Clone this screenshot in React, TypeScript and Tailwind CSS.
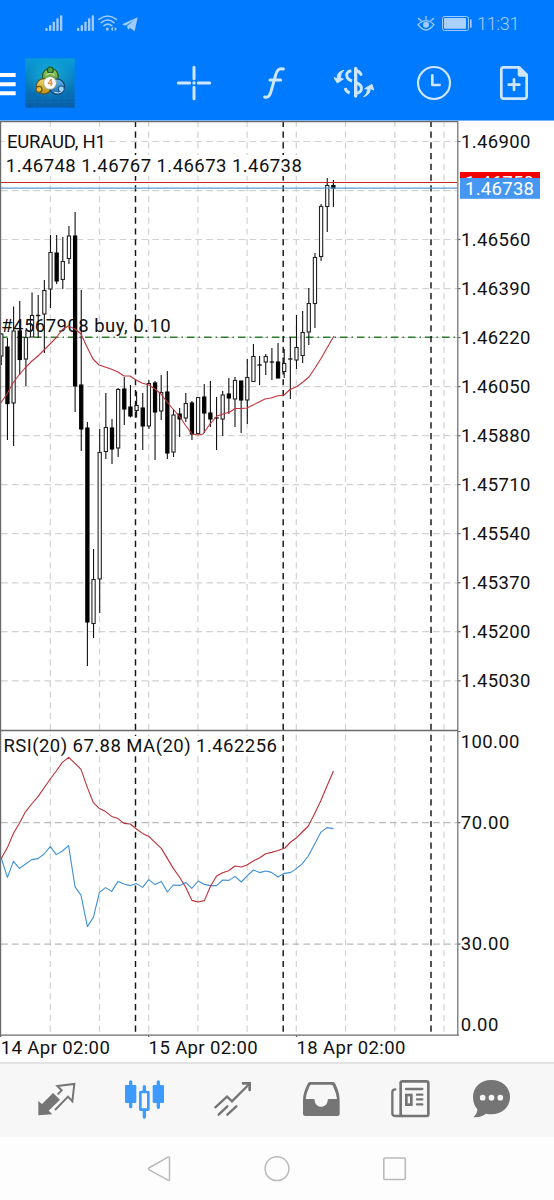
import React from "react";

type Candle = [high: number, top: number, bottom: number, low: number, kind: 0 | 1 | 2];

const STEP = 6.15;
const FIRST = 1.3;

// kind: 0 = hollow (up), 1 = filled (down), 2 = doji
const CANDLES: Candle[] = [
  [333, 334, 356, 365, 0], [338, 347, 403.6, 440, 1], [306.5, 331, 403, 446, 0], [301, 331, 359.5, 375, 1],
  [330, 337.5, 359, 386, 0], [292.5, 315.5, 337, 337, 0], [295, 315.5, 315.5, 338, 2], [280, 290.5, 314, 353, 0],
  [235, 252.5, 289, 308, 0], [235, 253, 281, 284, 1], [237, 261.5, 279.5, 289, 0], [226, 236, 258.5, 264, 0],
  [212, 236, 386, 412, 1], [290, 385, 429, 451, 1], [422, 428, 622, 666, 1], [549, 579.5, 623.5, 638, 0],
  [429, 452.5, 579, 613, 0], [393, 427.5, 451.5, 459, 0], [419, 428, 449, 464, 1], [388, 389.5, 448, 457, 0],
  [377, 389, 409, 425, 1], [385, 407, 416, 417.5, 1], [391.5, 405.5, 410.5, 417.5, 0], [393, 408, 426, 450, 1],
  [380, 383.5, 426, 429, 0], [381, 383, 412, 460, 1], [375, 392.5, 411, 420, 0], [371, 392, 453, 459, 1],
  [409, 415, 452, 457, 0], [408, 414, 419, 437, 1], [393, 403.5, 418, 422, 0], [401, 403, 434, 440, 1],
  [397, 397.5, 433.5, 434, 0], [384, 397, 413, 433, 1], [381, 413, 419, 427, 1], [397, 418, 418, 450, 2],
  [391, 395, 419, 436, 0], [378, 394, 398, 414, 1], [377, 380.5, 399, 427, 0], [381, 381, 400, 433, 1],
  [359, 377.5, 400, 424, 0], [344, 356.5, 381.5, 382, 0], [356, 365, 365, 385, 2], [354, 356.5, 362, 375, 0],
  [348, 362, 362, 380, 2], [343, 362, 378, 378, 1], [349, 363.5, 371.5, 378, 0], [337, 359, 359, 399, 2],
  [315, 347.5, 360, 369, 0], [311, 332.5, 355.5, 363, 0], [288, 303.5, 332, 345, 0], [253, 257.5, 303.5, 328, 0],
  [204, 206.5, 256.5, 261, 0], [178, 185.5, 206.5, 232, 0], [180, 185.5, 188.5, 207, 1],
];

const PRICE_MA =
  "0,404 7,394 13,383 19,375 25,368 32,361 38,356 44,350 50,344 56,338 62,330 68,326 75,329 81,334 87,347 93,359 99,365 105,367 111,369 118,372 124,376 130,376 136,380 142,383 149,385 155,389 161,394 167,402 173,409 180,417 186,426 192,434 198,435 203,434 210,424 217,416 223,414 230,412 235,408.5 241,408.5 247,408 253,405 259,402 265,399 271,398 277,396 284,395 290,389.5 297,386.5 303,382 309,377 315,368 321,358.5 327,348 334,336";

const RSI_MA =
  "1,859 7.4,847.6 13.4,833.5 19.4,823.2 25.6,811.6 31.7,804 38,796.6 44,788 50.3,779 56.3,771 62.4,762.4 68.6,757.4 75,763.4 81,769.4 87.4,787.6 93.4,802.6 99.4,808.6 105.6,811.6 111.7,816.4 118,818.6 124,823.4 130.3,824 136.4,829 142.6,833.4 148.7,836.4 155,842.4 161.3,848.4 167.3,858.4 173.3,868.4 179.8,877.5 185.8,887.5 192,900.4 198,902 204.4,900.6 210.6,886 216.6,876 222.6,872.7 228.6,870.7 235,866 241.3,867 247,865 253.3,861 259.4,858 265.6,853.7 271.6,852.4 278,850.5 285,848 290.7,842 296.7,837.7 302.3,832 308.3,826 314.7,813.4 320.7,801 327,786 333.5,771";

const RSI =
  "1,857 7.4,877.4 13.4,861.4 19.4,868.4 25.6,864 31.7,859.6 38,858.6 44,854 50.3,846.6 56.3,854.6 62.4,851 68.6,845.6 75,886.6 81,895.4 87.4,926.6 93.4,917.4 99.4,892.4 105.6,887.6 111.7,891.4 118,881.4 124,884 130.3,885.6 136.4,883.6 142.6,887.4 148.7,879.6 155,884.6 161.3,881.4 167.3,892 173.3,885 179.8,885.4 185.8,882.4 191.8,888.4 198.3,881 204.4,884.4 210.6,885.6 216.6,885.6 222.6,880 229,880.4 235,876.4 241.3,882 247.4,875.6 253.4,870 259.7,872.6 265.6,871 271.6,872.4 278,877 283.4,873.6 290.7,872.4 296.7,868.4 302.3,863.6 308.3,856 314.7,844 320.7,832.4 327,827.6 333.5,828.6";

const GRID_X = [50.3, 99.5, 148.7, 197.9, 247.1, 296.3, 345.5, 394.8, 444];
const DAYS_X = [135.5, 283.2, 431];
const PRICES: [string, number][] = [
  ["1.46900", 141.5], ["1.46560", 239.5], ["1.46390", 288.6], ["1.46220", 337.5], ["1.46050", 386.6], ["1.45880", 435.7],
  ["1.45710", 484.6], ["1.45540", 533.7], ["1.45370", 582.8], ["1.45200", 631.7], ["1.45030", 680.8],
];
const RSI_LEVELS: [string, number, number][] = [
  ["100.00", 748, 58.5], ["70.00", 829, 48.5], ["30.00", 950.3, 48.5], ["0.00", 1031, 37.5],
];

function Label({ x, y, w, fill = "#111", children }: { x: number; y: number; w: number; fill?: string; children: string }) {
  return (
    <text x={x} y={y} textLength={w} lengthAdjust="spacing" fill={fill} fontSize="18.5" fontFamily="Roboto, sans-serif">
      {children}
    </text>
  );
}

function Chart() {
  return (
    <svg className="block shrink-0 bg-white" width="554" height="942" viewBox="0 120 554 942">
      <rect x="0" y="120" width="554" height="1" fill="#73b3f3" />

      <g stroke="#d2d2d2" strokeWidth="1.2" fill="none">
        {GRID_X.map((x) => (
          <React.Fragment key={x}>
            <path d={`M${x} 730V122`} strokeDasharray="6.2 4.57" />
            <path d={`M${x} 1035V732`} strokeDasharray="6.2 4.57" strokeDashoffset="7.5" />
          </React.Fragment>
        ))}
        <path d="M1 190.7H457" strokeDasharray="6.8 4" />
        {PRICES.map(([p, y]) => (
          <path key={p} d={`M1 ${y}H457`} strokeDasharray="6.8 4" />
        ))}
        <path d="M1 822.7H457M1 944.2H457" stroke="#bababa" strokeDasharray="6.8 4" />
      </g>

      <path d="M0 337.2H457" stroke="#2f7f2f" strokeWidth="1.4" strokeDasharray="7.5 4 1.5 4" fill="none" />

      <g stroke="#151515" strokeWidth="1.45" strokeDasharray="6.2 4.57" fill="none">
        {DAYS_X.map((x) => (
          <React.Fragment key={x}>
            <path d={`M${x} 730V122`} />
            <path d={`M${x} 1035V732`} strokeDashoffset="7.5" />
          </React.Fragment>
        ))}
      </g>

      <rect x="5" y="132" width="103" height="20" fill="#fff" />
      <rect x="5" y="155" width="299" height="21" fill="#fff" />
      <rect x="3" y="736" width="275" height="20" fill="#fff" />

      <g>
        {CANDLES.map(([high, top, bottom, low, kind], i) => {
          const x = FIRST + STEP * i;
          return (
            <g key={i} stroke="#111" strokeWidth="1.1">
              <path d={`M${x} ${high}V${low}`} />
              {kind === 2 ? (
                <path d={`M${x - 2.2} ${top}H${x + 2.2}`} strokeWidth="1.3" />
              ) : (
                <rect
                  x={x - 1.6}
                  y={top}
                  width="3.2"
                  height={bottom - top}
                  fill={kind === 1 ? "#000" : "#fff"}
                  stroke={kind === 1 ? "#000" : "#222"}
                />
              )}
            </g>
          );
        })}
      </g>

      <path d="M0 182.5H457" stroke="#c4262d" strokeWidth="1.2" />
      <path d="M0 188.2H457" stroke="#5b9bd5" strokeWidth="1.2" />

      <Label x={7} y={147.8} w={99}>EURAUD, H1</Label>
      <Label x={5.800} y={172} w={296}>1.46748 1.46767 1.46673 1.46738</Label>
      <Label x={1.2} y={331.5} w={169.5}>#4567908 buy, 0.10</Label>
      <Label x={3.4} y={752.2} w={273.5}>RSI(20) 67.88 MA(20) 1.462256</Label>

      <g fill="none" strokeWidth="1.1" strokeLinejoin="round">
        <polyline points={PRICE_MA} stroke="#c2343b" />
        <polyline points={RSI} stroke="#3f8fd6" />
        <polyline points={RSI_MA} stroke="#bb2f38" />
      </g>

      <g fill="none" stroke="#6b6b6b" strokeWidth="1.2">
        <path d="M0 121.6H458M0.6 121V1037M457.8 121V1035M0 1035.2H459" />
        <path d="M0 730.5H458" strokeWidth="1.6" />
        <path d="M148.7 1035v2M296.5 1035v2" />
        {PRICES.map(([p, y]) => (
          <path key={p} d={`M458 ${y}h2.5`} />
        ))}
        <path d="M458 731.5h2.5M458 822.7h2.5M458 944.2h2.5" />
      </g>

      {PRICES.map(([p, y]) => (
        <Label key={p} x={461} y={y + 6.6} w={69.5}>{p}</Label>
      ))}
      {RSI_LEVELS.map(([t, y, w]) => (
        <Label key={t} x={460.8} y={y} w={w}>{t}</Label>
      ))}

      <rect x="460" y="172" width="80" height="20" fill="#f00000" />
      <Label x={465} y={189} w={69} fill="#fff">1.46750</Label>
      <rect x="460" y="178" width="80" height="20.8" fill="#4597f3" />
      <Label x={465} y={194.5} w={69} fill="#fff">1.46738</Label>

      <Label x={0.8} y={1054.4} w={109}>14 Apr 02:00</Label>
      <Label x={148.6} y={1054.4} w={109}>15 Apr 02:00</Label>
      <Label x={296.4} y={1054.4} w={109}>18 Apr 02:00</Label>
    </svg>
  );
}

function StatusBar() {
  return (
    <div className="flex h-[46px] items-center">
      <svg className="ml-11 h-[18px] w-[98px]" viewBox="132 42 294 54" fill="#9fcbff">
        {[0, 95].map((dx) => (
          <g key={dx} transform={`translate(${dx} 0)`}>
            <rect x="136" y="84" width="7" height="9" rx="2" />
            <rect x="147" y="75" width="7" height="18" rx="2" />
            <rect x="158" y="65" width="7" height="28" rx="2" />
            <rect x="169" y="55" width="7" height="38" rx="2" />
            <rect x="180" y="46" width="7" height="47" rx="2" />
          </g>
        ))}
        <g fill="none" stroke="#9fcbff" strokeWidth="5" strokeLinecap="round">
          <path d="M297 58Q323 38 349 58M304 68Q323 52 342 68M312 77Q323 68 335 77" />
        </g>
        <circle cx="322" cy="87" r="4.5" />
        <path d="M332 87l7-7v14zM351 87l-7-7v14z" />
        <path d="M366 73L413 52L404 94L390 84L384 89L381 78L403 60L376 77Z" />
      </svg>
      <svg className="ml-[273px] h-[18px] w-[60px]" viewBox="423 42 180 54">
        <g fill="none" stroke="#9fcbff" strokeWidth="4" strokeLinecap="round">
          <path d="M432 74Q456 50 480 74Q456 106 432 74Z" />
          <path d="M456 58V49M441 62L433 55M471 62L479 55" />
          <rect x="505.5" y="49.5" width="78" height="42" rx="6" strokeWidth="3" />
        </g>
        <circle cx="456" cy="74" r="9" fill="#9fcbff" />
        <rect x="510" y="54" width="66" height="32" rx="2" fill="#a9d0ff" />
        <rect x="588" y="58" width="5" height="25" rx="2" fill="#9fcbff" />
      </svg>
      <span className="ml-[2px] pt-px font-[Roboto,sans-serif] text-[18px] leading-5 font-light tracking-[-0.3px] text-[#a9d0ff]">11:31</span>
    </div>
  );
}

function Logo() {
  return (
    <svg className="ml-[8.5px] h-[50px] w-[50px]" viewBox="72 174 150 150">
      <defs>
        <linearGradient id="logo-bg" x1="0" y1="0" x2="0" y2="1">
          <stop offset="0" stopColor="#0a9cd6" />
          <stop offset="1" stopColor="#075da8" />
        </linearGradient>
        <radialGradient id="logo-glow">
          <stop offset="0" stopColor="#25c4d8" stopOpacity="0.6" />
          <stop offset="1" stopColor="#25c4d8" stopOpacity="0" />
        </radialGradient>
        <linearGradient id="logo-green" x1="0" y1="0" x2="0" y2="1">
          <stop offset="0" stopColor="#a5d25c" />
          <stop offset="1" stopColor="#338530" />
        </linearGradient>
        <linearGradient id="logo-yellow" x1="0" y1="0" x2="0" y2="1">
          <stop offset="0" stopColor="#f5de6e" />
          <stop offset="1" stopColor="#b98d16" />
        </linearGradient>
        <linearGradient id="logo-blue" x1="0" y1="0" x2="0" y2="1">
          <stop offset="0" stopColor="#62b9e8" />
          <stop offset="1" stopColor="#1b6db5" />
        </linearGradient>
      </defs>
      <rect x="73" y="175" width="148" height="148" fill="url(#logo-bg)" />
      <ellipse cx="147" cy="235" rx="72" ry="62" fill="url(#logo-glow)" />
      <path d="M73 295H221M73 307H221M100 285V323M123 285V323M147 285V323M171 285V323M194 285V323" stroke="#2f8fc7" strokeWidth="1" opacity="0.5" />
      <g strokeWidth="3.5">
        <circle cx="148" cy="229" r="24" fill="url(#logo-green)" stroke="#24552c" />
        <circle cx="129" cy="259" r="23" fill="url(#logo-yellow)" stroke="#63521a" />
        <circle cx="168" cy="260" r="23" fill="url(#logo-blue)" stroke="#123f6b" />
        <circle cx="148" cy="210" r="9" fill="#4aa640" stroke="#1e5724" />
        <circle cx="114" cy="268" r="9" fill="#e4bd42" stroke="#6b5616" />
        <circle cx="181" cy="267" r="9" fill="#9ed7fa" stroke="#1f5788" />
      </g>
      <path d="M134 227Q147 214 162 227" fill="none" stroke="#d0ecac" strokeWidth="3" />
      <path d="M160 277Q173 283 184 274" fill="none" stroke="#d7efff" strokeWidth="3" />
      <circle cx="147" cy="249" r="19" fill="#fff" stroke="#8d9a80" strokeWidth="2" />
      <text x="148" y="259" fill="#e58a4c" fontSize="29" fontWeight="700" fontFamily="Roboto, sans-serif" textAnchor="middle">4</text>
    </svg>
  );
}

function ToolIcon({ x, children }: { x: number; children: React.ReactNode }) {
  return (
    <svg
      className="h-[50px] w-20"
      viewBox={`${x} 174 240 150`}
      fill="none"
      stroke="#cfe6ff"
      strokeWidth="9"
      strokeLinecap="round"
      strokeLinejoin="round"
    >
      {children}
    </svg>
  );
}

function Toolbar() {
  return (
    <div className="flex h-[74px] items-center">
      <svg className="h-[50px] w-4" viewBox="0 174 48 150">
        <path d="M0 225H47M0 252.5H47M0 280H47" stroke="#fff" strokeWidth="12" />
      </svg>
      <Logo />
      <div className="ml-[79.5px] flex">
        <ToolIcon x={462}>
          <path d="M582 202V236M582 262V296M535 249H569M595 249H629" />
          <circle cx="582" cy="249" r="5" fill="#cfe6ff" stroke="none" />
        </ToolIcon>
        <ToolIcon x={-120}>
          <path d="M28 207C14 203 8 213 5 225L-8 271C-12 286 -17 295 -28 291M-12 240H20" />
        </ToolIcon>
        <ToolIcon x={120}>
          <path d="M245 205V288" strokeWidth="10" />
          <path d="M261 223C257 215 250 212 245 212M245 247C258 252 265 258 262 269C260 276 253 279 245 280" strokeWidth="9" />
          <path d="M232 212C219 214 215 223 220 233C223 238 228 241 234 243M214 264C215 272 220 276 227 279" strokeWidth="9" strokeLinecap="butt" />
          <path d="M209 211Q187 216 190 236L180 233L190 249L208 237L199 235Q199 219 209 211Z" fill="#cfe6ff" strokeWidth="3" />
          <path d="M270 290Q291 282 288 265L299 270L294 253L272 266L281 267Q281 281 270 290Z" fill="#cfe6ff" strokeWidth="3" />
        </ToolIcon>
        <ToolIcon x={360}>
          <circle cx="480" cy="249" r="48" strokeWidth="6.5" />
          <path d="M475 226V255H497" strokeWidth="8" />
        </ToolIcon>
        <ToolIcon x={600}>
          <path d="M686 202H736L758 224V289Q758 296 751 296H689Q682 296 682 289V209Q682 202 689 202Z" strokeWidth="8" />
          <path d="M731 202H738L758 223V230H738Q731 230 731 222Z" fill="#cfe6ff" stroke="none" />
          <path d="M720 238V270M704 254H736" strokeWidth="8" />
        </ToolIcon>
      </div>
    </div>
  );
}

function TabBar() {
  return (
    <div className="flex h-[75px] shrink-0 border-t-2 border-[#e2e2e2] bg-[#f7f7f7] pl-3">
      <svg className="h-[73px] w-[89px]" viewBox="36 12 267 219" fill="none" stroke="#757575">
        <path d="M115 123V166L157 163L146 152L180 119L159 99L126 132Z" fill="#757575" stroke="none" />
        <path d="M173 103L185 91L172 78L223 72L217 124L204 110L165 150" strokeWidth="6" />
      </svg>
      <svg className="h-[73px] w-[88px]" viewBox="303 12 264 219" fill="none" stroke="#3d9bff" strokeLinecap="round">
        <path d="M392 66V140M475 66V142M433 80V94M433 153V171" strokeWidth="10" />
        <rect x="375" y="75" width="34" height="54" rx="3" fill="#3d9bff" stroke="none" />
        <rect x="458" y="75" width="34" height="54" rx="3" fill="#3d9bff" stroke="none" />
        <rect x="421" y="96" width="24" height="53" rx="1" strokeWidth="8" />
      </svg>
      <svg className="h-[73px] w-[88px]" viewBox="567 12 264 219" fill="none" stroke="#757575" strokeWidth="7" strokeLinecap="round">
        <path d="M646 142L681 110L696 124L748 72M656 164L682 139M682 164L709 139" />
        <path d="M729 70H749V90" strokeWidth="8" />
      </svg>
      <svg className="h-[73px] w-[89px]" viewBox="9 12 267 219" fill="#757575">
        <path
          fillRule="evenodd"
          d="M108 66H177Q182 66 184 71Q197 98 197 119V162Q197 168 190 168H94Q87 168 87 162V119Q87 98 101 71Q103 66 108 66ZM112 74Q109 74 107 78Q97 99 95 117H119Q122 117 122 121C123 147 160 147 161 121Q161 117 165 117H189Q187 99 177 78Q175 74 172 74Z"
        />
      </svg>
      <svg className="h-[73px] w-[89px]" viewBox="276 12 267 219" fill="none" stroke="#757575" strokeWidth="7" strokeLinecap="round">
        <rect x="380" y="64" width="83" height="104" rx="5" strokeWidth="8" />
        <path d="M364 88Q355 88 355 97V160Q355 168 363 168H386" />
        <path d="M396 87H445M429 104H445M429 118H445M429 133H445" />
        <rect x="397" y="105" width="15" height="29" strokeWidth="8" />
      </svg>
      <svg className="h-[73px] w-[88px]" viewBox="543 12 264 219">
        <path d="M652 60C684 60 708 82 708 111C708 141 684 163 652 163Q644 163 636 161C625 170 611 172 598 172C607 164 610 157 610 148C602 139 597 126 597 111C597 82 620 60 652 60Z" fill="#757575" />
        <g fill="#f7f7f7">
          <circle cx="626" cy="113" r="8.5" />
          <circle cx="652.5" cy="113" r="8.5" />
          <circle cx="679" cy="113" r="8.5" />
        </g>
      </svg>
    </div>
  );
}

function SystemNav() {
  return (
    <div className="flex h-[63px] shrink-0 items-center justify-center gap-[92px] bg-[#fdfdfd]">
      <svg className="h-[26px] w-[26px]" viewBox="0 0 26 26" fill="none" stroke="#bababa" strokeWidth="1.5" strokeLinejoin="round">
        <path d="M2.8 12L22 1.1Q23.5 .6 23.5 2V23.5Q23.5 25 22 24.2L2.800 13.6Q2 12.8 2.8 12Z" />
      </svg>
      <svg className="h-[26px] w-[26px]" viewBox="0 0 26 26" fill="none" stroke="#bababa" strokeWidth="1.5">
        <circle cx="13" cy="12.7" r="11.9" />
      </svg>
      <svg className="h-[26px] w-[26px]" viewBox="0 0 26 26" fill="none" stroke="#bababa" strokeWidth="1.6">
        <rect x="1.8" y="2" width="21.5" height="21.5" rx="1" />
      </svg>
    </div>
  );
}

export default function App() {
  return (
    <div className="flex h-[1200px] w-[554px] flex-col overflow-hidden bg-white">
      <header className="h-[120px] shrink-0 bg-[#007aff]">
        <StatusBar />
        <Toolbar />
      </header>
      <Chart />
      <TabBar />
      <SystemNav />
    </div>
  );
}
